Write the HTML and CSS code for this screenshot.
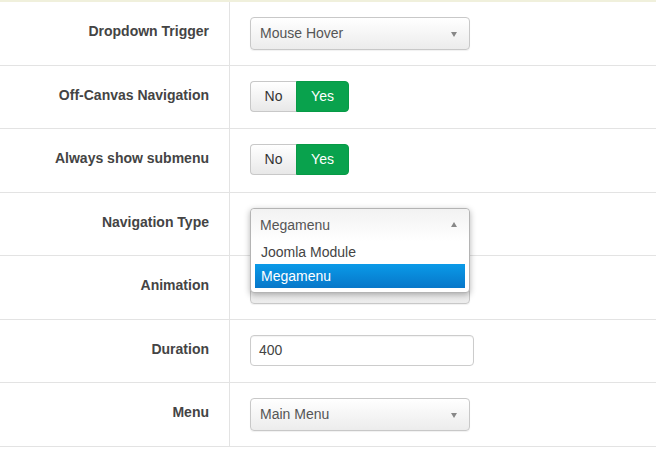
FILE: index.html
```html
<!DOCTYPE html>
<html lang="en">
<head>
    <meta charset="UTF-8">
    <title>Menu Settings</title>
    <link rel="stylesheet" href="styles.css">
</head>
<body>
    <div class="settings">
        <div class="row">
            <div class="label">Dropdown Trigger</div>
            <div class="control">
                <div class="select">Mouse Hover <span class="caret"></span></div>
            </div>
        </div>
        <div class="row">
            <div class="label">Off-Canvas Navigation</div>
            <div class="control">
                <div class="toggle">
                    <span class="btn">No</span>
                    <span class="btn active">Yes</span>
                </div>
            </div>
        </div>
        <div class="row">
            <div class="label">Always show submenu</div>
            <div class="control">
                <div class="toggle">
                    <span class="btn">No</span>
                    <span class="btn active">Yes</span>
                </div>
            </div>
        </div>
        <div class="row">
            <div class="label">Navigation Type</div>
            <div class="control">
                <div class="dropdown">
                    <div class="dropdown-head">Megamenu <span class="caret up"></span></div>
                    <ul class="options">
                        <li>Joomla Module</li>
                        <li class="selected">Megamenu</li>
                    </ul>
                </div>
            </div>
        </div>
        <div class="row">
            <div class="label">Animation</div>
            <div class="control">
                <!-- value hidden behind the open list above -->
                <div class="select"><span class="caret"></span></div>
            </div>
        </div>
        <div class="row">
            <div class="label">Duration</div>
            <div class="control">
                <div class="input">400</div>
            </div>
        </div>
        <div class="row">
            <div class="label">Menu</div>
            <div class="control">
                <div class="select">Main Menu <span class="caret"></span></div>
            </div>
        </div>
    </div>
</body>
</html>
```

FILE: styles.css
```css
body {
    margin: 0;
    background-color: #fff;
    font-family: "Liberation Sans", Arial, sans-serif;
    font-size: 14px;
    color: #555;
}

.settings {
    border-top: 2px solid #f0f0dc;
}

.row {
    display: grid;
    grid-template-columns: 230px 1fr;
    height: 62.5px;
    border-bottom: 1px solid #e3e3e3;
}

.label {
    border-right: 1px solid #e3e3e3;
    padding: 19px 20px 0 0;
    text-align: right;
    font-weight: bold;
    line-height: 20px;
    color: #444;
}

.control {
    position: relative;
    padding: 15px 0 0 20px;
}

.select {
    position: relative;
    box-sizing: border-box;
    width: 220px;
    height: 33px;
    padding-left: 9px;
    line-height: 31px;
    border: 1px solid #c8c8c8;
    border-radius: 4px;
    background: linear-gradient(#ffffff, #ececec);
    box-shadow: 0 1px 1px rgba(0, 0, 0, 0.06);
    color: #555;
}

.caret {
    position: absolute;
    right: 12px;
    top: 14px;
    width: 0;
    height: 0;
    border-left: 3.5px solid transparent;
    border-right: 3.5px solid transparent;
    border-top: 5px solid #888;
}

.caret.up {
    border-top: none;
    border-bottom: 5px solid #888;
    top: 13px;
}

.toggle {
    display: flex;
    height: 31px;
}

.toggle .btn {
    box-sizing: border-box;
    width: 46px;
    line-height: 29px;
    text-align: center;
    color: #333;
    border: 1px solid #c8c8c8;
    border-right: none;
    border-radius: 4px 0 0 4px;
    background: linear-gradient(#ffffff, #e8e8e8);
}

.toggle .btn.active {
    width: 53px;
    color: #fff;
    border: 1px solid #079a46;
    border-radius: 0 4px 4px 0;
    background: #09a24d;
}

.input {
    box-sizing: border-box;
    width: 224px;
    height: 31px;
    padding-left: 8px;
    line-height: 29px;
    border: 1px solid #cccccc;
    border-radius: 4px;
    box-shadow: inset 0 1px 1px rgba(0, 0, 0, 0.05);
    color: #444;
}

.dropdown {
    position: absolute;
    z-index: 2;
    top: 15px;
    left: 20px;
    box-sizing: border-box;
    width: 220px;
    border: 1px solid #b4b4b4;
    border-radius: 4px;
    background: #fff;
    box-shadow: 0 2px 6px rgba(0, 0, 0, 0.3);
}

.dropdown-head {
    position: relative;
    height: 32px;
    padding-left: 9px;
    line-height: 32px;
    background: linear-gradient(#f2f2f2, #ffffff);
    border-radius: 4px 4px 0 0;
}

.options {
    list-style: none;
    margin: 0;
    padding: 0 4px 4px 4px;
}

.options li {
    height: 23px;
    line-height: 22px;
    padding-left: 6px;
    color: #444;
}

.options li.selected {
    height: 24px;
    line-height: 24px;
    color: #fff;
    background: linear-gradient(#0a9ae8, #0777c9);
}
```
